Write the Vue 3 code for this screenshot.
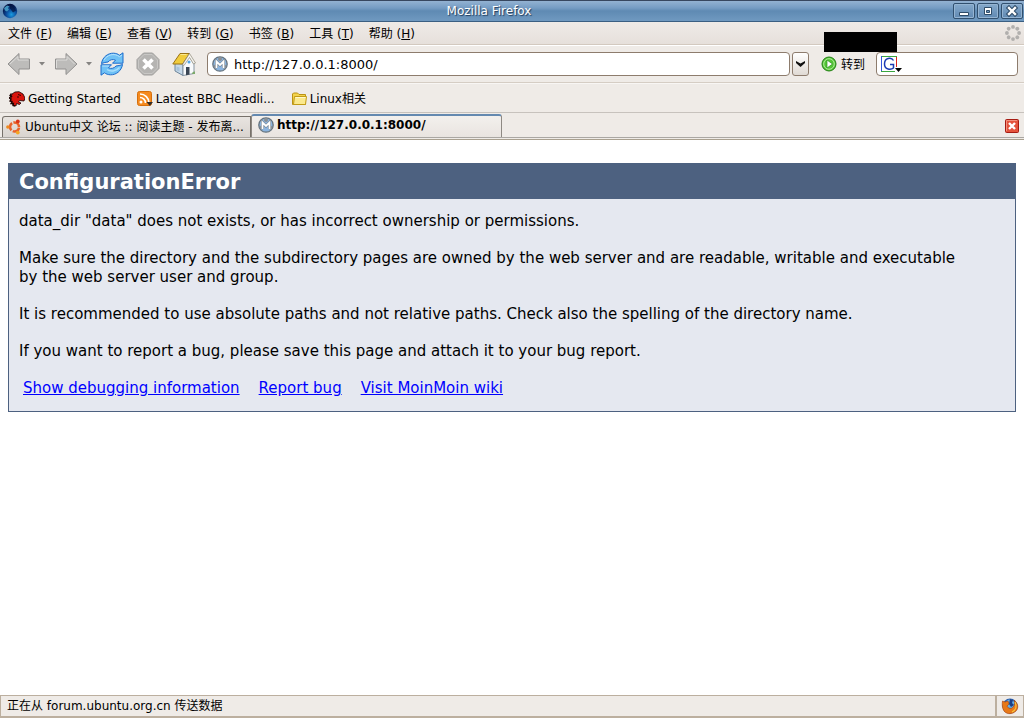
<script setup>
import { ref } from 'vue'

const menus = [
  ['文件', 'F'], ['编辑', 'E'], ['查看', 'V'], ['转到', 'G'],
  ['书签', 'B'], ['工具', 'T'], ['帮助', 'H'],
]
const url = ref('http://127.0.0.1:8000/')
const query = ref('')
const spokes = [0, 45, 90, 135, 180, 225, 270, 315]
const circle = [0, 120, 240]
</script>

<template>
  <div class="window">
    <header class="titlebar">
      <svg class="globe" viewBox="0 0 16 16" aria-hidden="true">
        <defs>
          <radialGradient id="globe" cx=".6" cy=".75" r=".7">
            <stop offset="0" stop-color="#1a9be0" />
            <stop offset=".5" stop-color="#0b4c9c" />
            <stop offset="1" stop-color="#04103f" />
          </radialGradient>
        </defs>
        <circle cx="8" cy="8" r="7.200" fill="url(#globe)" />
        <path d="M2 5l3-2.500 2.500 1-1.500 1.500 1 1.500-2 2-2-1z" fill="#3f93c0" />
        <path d="M8 1.500l4 2 2 4-3 2-3-4z" fill="#03123d" opacity=".7" />
      </svg>
      <h1 class="title">Mozilla Firefox</h1>
      <div class="controls">
        <button type="button" aria-label="Minimize">
          <svg viewBox="0 0 20 14"><path d="M5.500 8.500h9v3h-9z" fill="#fff" stroke="#2f4c69" /></svg>
        </button>
        <button type="button" aria-label="Maximize">
          <svg viewBox="0 0 20 14"><path d="M6.500 3.500h7v7h-7z" fill="#fff" stroke="#2f4c69" /><path d="M8.500 6.500h3v2h-3z" fill="#6b94bb" stroke="#2f4c69" /></svg>
        </button>
        <button type="button" aria-label="Close">
          <svg viewBox="0 0 20 14"><path d="M7 4l6 6M13 4l-6 6" stroke="#2f4c69" stroke-width="4.500" stroke-linecap="square" /><path d="M7 4l6 6M13 4l-6 6" stroke="#fff" stroke-width="2.400" stroke-linecap="square" /></svg>
        </button>
      </div>
    </header>

    <nav class="menubar">
      <button v-for="[name, key] in menus" :key="key" type="button">{{ name }} (<u>{{ key }}</u>)</button>
      <svg class="throbber" viewBox="0 0 16 16" aria-hidden="true">
        <circle v-for="a in spokes" :key="a" cx="8" cy="1.900" r="1.900" fill="#b1afad" :transform="`rotate(${a} 8 8)`" />
      </svg>
    </nav>

    <div class="toolbar">
      <button type="button" class="arrow" aria-label="Back">
        <svg viewBox="0 0 24 24"><path d="M1 12L12 1.500V7h10.500v10H12v5.500z" fill="#bdbcba" stroke="#929190" /><path d="M3 12l8-7.500V8h10.500" fill="none" stroke="#dddcda" /></svg>
      </button>
      <button type="button" class="drop" aria-label="Back history"><svg viewBox="0 0 6 4"><path d="M0 0h6L3 3.500z" fill="#858381" /></svg></button>
      <button type="button" class="arrow" aria-label="Forward">
        <svg viewBox="0 0 24 24"><path d="M23 12L12 1.500V7H1.500v10H12v5.500z" fill="#bdbcba" stroke="#929190" /><path d="M2.500 16V8H13V4.500L20.500 12" fill="none" stroke="#dddcda" /></svg>
      </button>
      <button type="button" class="drop" aria-label="Forward history"><svg viewBox="0 0 6 4"><path d="M0 0h6L3 3.500z" fill="#858381" /></svg></button>
      <button type="button" class="reload" aria-label="Reload">
        <svg viewBox="0 0 24 24">
          <g fill="#6fc1f5" stroke="#1d6ccc" stroke-linejoin="round">
            <path d="M1.500 11.500C2.500 5 8 1 13.500 1.200c2.500.1 4.500.8 6 2L23 .8v10.400H12.500l3-3C13 7 10 7.500 8 10q-3 .2-6.500 1.500z" />
            <path d="M22.500 12.500c-1 6.500-6.500 10.500-12 10.300-2.500-.1-4.500-.8-6-2L1 23.200V12.800h10.500l-3 3c2.500 1.200 5.500.7 7.500-1.800q3-.2 6.500-1.500z" />
          </g>
          <path d="M4 8C7 3 14 .5 19.500 4.700L22 3M2.200 14H9" fill="none" stroke="#b9e4fd" /><path d="M7 17.500c3.500 2.500 9 2 12.500-2" fill="none" stroke="#a9defc" stroke-width="1.500" />
        </svg>
      </button>
      <button type="button" class="stop" aria-label="Stop">
        <svg viewBox="0 0 24 24"><path d="M7.500 1h9L23 7.500v9L16.500 23h-9L1 16.500v-9z" fill="#b5b4b2" stroke="#a09f9d" /><path d="M8 2.500h8L21.500 8v8L16 21.500H8L2.500 16V8z" fill="none" stroke="#c8c7c5" /><path d="M7.500 7.500l9 9M16.500 7.500l-9 9" stroke="#fff" stroke-width="3.600" /></svg>
      </button>
      <button type="button" class="home" aria-label="Home">
        <svg viewBox="0 0 24 24">
          <path d="M3 11v8l8 4.500V12z" fill="#c5d8e8" stroke="#6d8499" /><path d="M11 12.500L17 4l5 8v9.500l-11 2z" fill="#f8fafc" stroke="#8796a4" />
          <path d="M8 1.500h9.500L10.500 12H.8z" fill="#f1cc3c" stroke="#9a7216" stroke-linejoin="round" /><path d="M8.500 2.500h6" stroke="#fae991" />
          <path d="M17.500 1.500L23.500 11l-2 1-4-6.500-5.500 8-1.500-1z" fill="#f5f3ee" stroke="#8d8879" stroke-width=".7" />
          <path d="M14 15h3.500v7.500l-3.500.7z" fill="#3b4654" /><circle cx="17" cy="10" r="1.500" fill="#4fa4e6" /><path d="M4.500 14.500l3 1v4l-3-1z" fill="#a9c3da" /><path d="M20 22q0-3 3-2.500V22z" fill="#7ca96b" />
        </svg>
      </button>
      <div class="address">
        <svg class="site" viewBox="0 0 16 16" aria-hidden="true">
          <circle cx="8" cy="8" r="7.200" fill="#8bb4df" stroke="#65737e" stroke-width="1.300" />
          <g fill="#8b8f94"><circle v-for="a in circle" :key="a" cx="8" cy="3" r="2" :transform="`rotate(${a} 8 8)`" /></g>
          <path d="M4.500 12V5.500L8 9l3.500-3.500V12" fill="none" stroke="#6b7986" stroke-width="3" /><path d="M4.500 12V5.500L8 9l3.500-3.500V12" fill="none" stroke="#fff" stroke-width="1.900" />
        </svg>
        <input v-model="url" type="text" aria-label="Address" />
      </div>
      <button type="button" class="history" aria-label="Address history"><svg viewBox="0 0 9 6"><path d="M0 0l4.500 2.500L9 0v2L4.500 6 0 2z" fill="#111" /></svg></button>
      <button type="button" class="go">
        <svg viewBox="0 0 16 16"><circle cx="8" cy="8" r="7" fill="#52c535" stroke="#217e12" /><circle cx="8" cy="8" r="5.300" fill="none" stroke="#b4ec9d" /><path d="M6 4L11.500 8 6 12z" fill="#fff" stroke="#2f8f1e" stroke-width=".7" /></svg>
        <span>转到</span>
      </button>
      <div class="search">
        <svg viewBox="0 0 22 18" aria-hidden="true">
          <path d="M1 1h15v15H1z" fill="#fff" /><path d="M0 1.500h16M0 16.500h14" stroke="#3aa63f" /><path d="M.5 1v15" stroke="#3656d8" /><path d="M15.500 2v10" stroke="#dc261e" />
          <path d="M12.500 5.500C10.500 2 3.500 2.500 3.500 9c0 6 6.500 6 9 4V9.500H9" fill="none" stroke="#1c3bb3" stroke-width="1.500" /><path d="M14 13h7l-3.500 4z" fill="#000" />
        </svg>
        <input v-model="query" type="text" aria-label="Google" />
      </div>
      <div class="patch"></div>
    </div>

    <nav class="bookmarks">
      <a href="#">
        <svg viewBox="0 0 16 16"><path d="M2 6l1-3 3-2 4-.3L14 3l2 4-1 3-4.500-.5-1 1.500 2.500 1-1.500 1.500-3-1L7 15l-3-1-1-3-1.500-1z" fill="#d9140d" stroke="#160000" stroke-width=".8" /><path d="M2.500 2.500L1 4.500l1.500 1L0 7l2 1-1 2 2 .5-1 2 2.500 0-.5 2 2 .5" fill="none" stroke="#1c0201" stroke-width="1.300" /><path d="M9 3.500l3 1M8 6h2" stroke="#3a0000" /></svg>
        Getting Started
      </a>
      <a href="#">
        <svg viewBox="0 0 16 16"><rect x=".5" y=".5" width="14" height="14" rx="2" fill="#f58a1f" stroke="#d66f0c" /><circle cx="4" cy="11" r="1.500" fill="#fff" /><path d="M3 6.500A5.500 5.500 0 0 1 8.500 12M3 3a9 9 0 0 1 9 9" fill="none" stroke="#fff" stroke-width="1.700" /><path d="M9.500 11h6.500l-3.200 4z" fill="#332d29" /></svg>
        Latest BBC Headli...
      </a>
      <a href="#">
        <svg viewBox="0 0 16 16"><path d="M1.500 13.500V3l1-1h4L8 3.500h6.500v10z" fill="#f3d34c" stroke="#bb9214" /><path d="M2.500 13.500L3.500 5.500h12l-1 8z" fill="#fbe98d" stroke="#c29b16" /><path d="M4.500 6.500h10" stroke="#fff8cc" /></svg>
        Linux相关
      </a>
    </nav>

    <div class="tabs" role="tablist">
      <button type="button" class="tab" role="tab" aria-selected="false">
        <svg viewBox="0 0 16 16">
          <circle cx="8.500" cy="8" r="4.500" fill="none" stroke="#e9632b" stroke-width="2.600" stroke-dasharray="8 1.425" stroke-dashoffset="-.7" />
          <circle cx="1.900" cy="8" r="1.800" fill="#ef8a1e" /><circle cx="11.800" cy="2.400" r="1.900" fill="#da3518" /><circle cx="11.800" cy="13.600" r="1.900" fill="#f4a623" />
        </svg>
        <span>Ubuntu中文 论坛 :: 阅读主题 - 发布离...</span>
      </button>
      <button type="button" class="tab active" role="tab" aria-selected="true">
        <svg viewBox="0 0 16 16">
          <circle cx="8" cy="8" r="7.200" fill="#8bb4df" stroke="#65737e" stroke-width="1.300" />
          <g fill="#8b8f94"><circle v-for="a in circle" :key="a" cx="8" cy="3" r="2" :transform="`rotate(${a} 8 8)`" /></g>
          <path d="M4.500 12V5.500L8 9l3.500-3.500V12" fill="none" stroke="#6b7986" stroke-width="3" /><path d="M4.500 12V5.500L8 9l3.500-3.500V12" fill="none" stroke="#fff" stroke-width="1.900" />
        </svg>
        <span>http://127.0.0.1:8000/</span>
      </button>
      <button type="button" class="close" aria-label="Close tab">
        <svg viewBox="0 0 14 14"><rect x=".5" y=".5" width="13" height="13" rx="1" fill="#e4523b" stroke="#a51b12" /><path d="M1.500 12V1.500H12" fill="none" stroke="#f2917e" /><path d="M4 4l6 6M10 4l-6 6" stroke="#fff" stroke-width="2.400" /></svg>
      </button>
    </div>

    <main class="page">
      <section class="error">
        <h2>ConfigurationError</h2>
        <div class="body">
          <p>data_dir "data" does not exists, or has incorrect ownership or permissions.</p>
          <p>Make sure the directory and the subdirectory pages are owned by the web server and are readable, writable and executable by the web server user and group.</p>
          <p>It is recommended to use absolute paths and not relative paths. Check also the spelling of the directory name.</p>
          <p>If you want to report a bug, please save this page and attach it to your bug report.</p>
          <div class="links">
            <a href="#">Show debugging information</a>
            <a href="#">Report bug</a>
            <a href="#">Visit MoinMoin wiki</a>
          </div>
        </div>
      </section>
    </main>

    <footer class="status">
      <div class="message">正在从 forum.ubuntu.org.cn 传送数据</div>
      <div class="badge">
        <svg viewBox="0 0 18 18" aria-hidden="true"><circle cx="9" cy="9" r="7.500" fill="#2b5fae" /><circle cx="9" cy="7" r="4.500" fill="#65aee4" /><path d="M9 2l3 1-1 3 2 2-3 2-2-3z" fill="#1c3f86" /><path d="M1.500 4L4 5l3-1 1 3-2 2c1 3 5 3 6 1 2-2 2-5 1-7 4 3 5 8 2 11s-9 4-12 0c-2-3-2-7-1.500-10z" fill="#e77817" stroke="#a5400f" stroke-width=".6" /><path d="M14 5c2 4 1 8-3 10" fill="none" stroke="#f9c63d" stroke-width="1.200" /></svg>
      </div>
    </footer>
  </div>
</template>

<style>
body { background: #fff; }
</style>

<style scoped>
.window {
  display: flex;
  flex-direction: column;
  min-height: 100vh;
  background: #fff;
  color: #000;
  font-family: "DejaVu Sans", "Noto Sans CJK SC", sans-serif;
  font-size: 12px;
  line-height: 16px;
}
* { box-sizing: border-box; }
svg { display: block; flex: none; }
button {
  margin: 0;
  padding: 0;
  border: 0;
  background: none;
  color: inherit;
  font: inherit;
}
input {
  flex: 1;
  min-width: 0;
  padding: 0;
  border: 0;
  outline: 0;
  background: none;
  font: inherit;
  font-size: 13px;
}
.titlebar {
  display: flex;
  align-items: center;
  height: 22px;
  padding: 0 1px 0 2px;
  border-top: 1px solid #37475f;
  border-bottom: 1px solid #3b5f82;
  background: linear-gradient(#93b2d2, #759cc3 35%, #5f8ab3 50%, #6e98bf 95%);
}
.globe { width: 16px; height: 16px; }
.title {
  flex: 1;
  margin: 0;
  padding-left: 7px;
  color: #fff;
  font-size: 12px;
  font-weight: 400;
  text-align: center;
  text-shadow: 1px 1px 1px #1f3b5a;
}
.controls { display: flex; gap: 2px; }
.controls button {
  border: 1px solid #31506f;
  border-radius: 2px;
  background: linear-gradient(#85a9cc, #6089b2);
  box-shadow: inset 0 0 0 1px #95b4d2;
}
.controls svg { width: 20px; height: 14px; }
.menubar {
  display: flex;
  align-items: center;
  gap: 15px;
  height: 23px;
  padding: 0 3px 0 8px;
  border-bottom: 1px solid #d3c9bf;
  background: linear-gradient(#efebe7, #e6e0db);
}
.menubar button { padding-top: 2px; }
.throbber { width: 16px; height: 16px; margin-left: auto; }
.toolbar {
  position: relative;
  display: flex;
  align-items: center;
  height: 38px;
  padding: 0 6px;
  border-top: 1px solid #fff;
  border-bottom: 1px solid #d5cdc4;
  background: #efebe7;
}
.toolbar svg { width: 24px; height: 24px; }
.arrow { margin-left: 1px; }
.toolbar .drop { padding: 0 8px; }
.toolbar .drop svg { width: 6px; height: 4px; }
.stop, .home { margin-left: 12px; }
.address {
  display: flex;
  flex: 1;
  align-items: center;
  gap: 6px;
  height: 24px;
  margin-left: 11px;
  padding: 0 4px;
  border: 1px solid #8d7c6d;
  border-radius: 4px;
  background: #fff;
}
.address input { padding-top: 2px; }
.toolbar .site { width: 16px; height: 16px; }
.history {
  display: grid;
  place-items: center;
  width: 17px;
  height: 24px;
  margin-left: 2px;
  border: 1px solid #8d7c6d;
  border-radius: 3px;
  background: linear-gradient(#fff, #e0dad4);
}
.toolbar .history svg { width: 9px; height: 6px; }
.go { display: flex; align-items: center; gap: 4px; margin: 0 11px 0 12px; }
.go span { padding-top: 2px; }
.toolbar .go svg { width: 16px; height: 16px; }
.search {
  display: flex;
  align-items: center;
  width: 142px;
  height: 24px;
  padding: 0 4px;
  border: 1px solid #8d7c6d;
  border-radius: 4px;
  background: #fff;
}
.toolbar .search svg { width: 22px; height: 18px; }
.patch {
  position: absolute;
  top: -14px;
  right: 127px;
  width: 73px;
  height: 20px;
  background: #000;
}
.bookmarks {
  display: flex;
  align-items: center;
  gap: 16px;
  height: 30px;
  padding: 1px 9px 0;
  border-top: 1px solid #f8f6f4;
  border-bottom: 1px solid #c7c2bd;
  background: #efebe7;
}
.bookmarks a {
  display: flex;
  align-items: center;
  gap: 3px;
  color: inherit;
  text-decoration: none;
}
.bookmarks svg { width: 16px; height: 16px; }
.tabs {
  display: flex;
  align-items: flex-end;
  height: 27px;
  padding: 0 5px 0 2px;
  border-bottom: 1px solid #a9a08f;
  background: linear-gradient(#efebe7 24px, #aaa7a3 24px, #aaa7a3 25px, #efebe7 25px);
}
.tab {
  display: flex;
  align-items: center;
  gap: 3px;
  width: 249px;
  height: 21px;
  margin-bottom: 2px;
  padding: 0 3px;
  border: 1px solid #77716a;
  border-bottom: 0;
  border-radius: 3px 0 0 0;
  background: linear-gradient(#e8e4e0, #d9d4cf);
  white-space: nowrap;
}
.tab svg { width: 16px; height: 16px; }
.tab.active {
  width: 251px;
  height: 23px;
  padding: 0 6px 3px;
  border-color: #8e8983;
  border-top: 2px solid #6489b0;
  border-radius: 3px 3px 0 0;
  background: linear-gradient(#f3f0ed, #e9e4e0);
  font-weight: 700;
}
.close { margin: 0 0 6px auto; }
.close svg { width: 14px; height: 14px; }
.page {
  flex: 1;
  padding: 23px 8px;
  line-height: 19px;
}
.error { border: 1px solid #4d6180; background: #e5e8f0; }
.error h2 {
  margin: 0;
  padding: 6px 10px 4px;
  background: #4d6180;
  color: #fff;
  font-size: 21px;
  line-height: 25px;
}
.body { padding: 13px 48px 13px 10px; font-size: 15px; }
.body p { margin: 0 0 18px; }
.links { display: flex; gap: 19px; padding: 0 4px; }
.links a { color: #00f; }
.status {
  display: flex;
  height: 23px;
  border: 1px solid #bcaf9f;
  border-bottom: 2px solid #bcaf9f;
  background: #efebe7;
}
.message { flex: 1; padding: 2px 6px; }
.badge { padding: 1px 4px; border-left: 2px solid #bcaf9f; }
.badge svg { width: 18px; height: 18px; }
</style>
